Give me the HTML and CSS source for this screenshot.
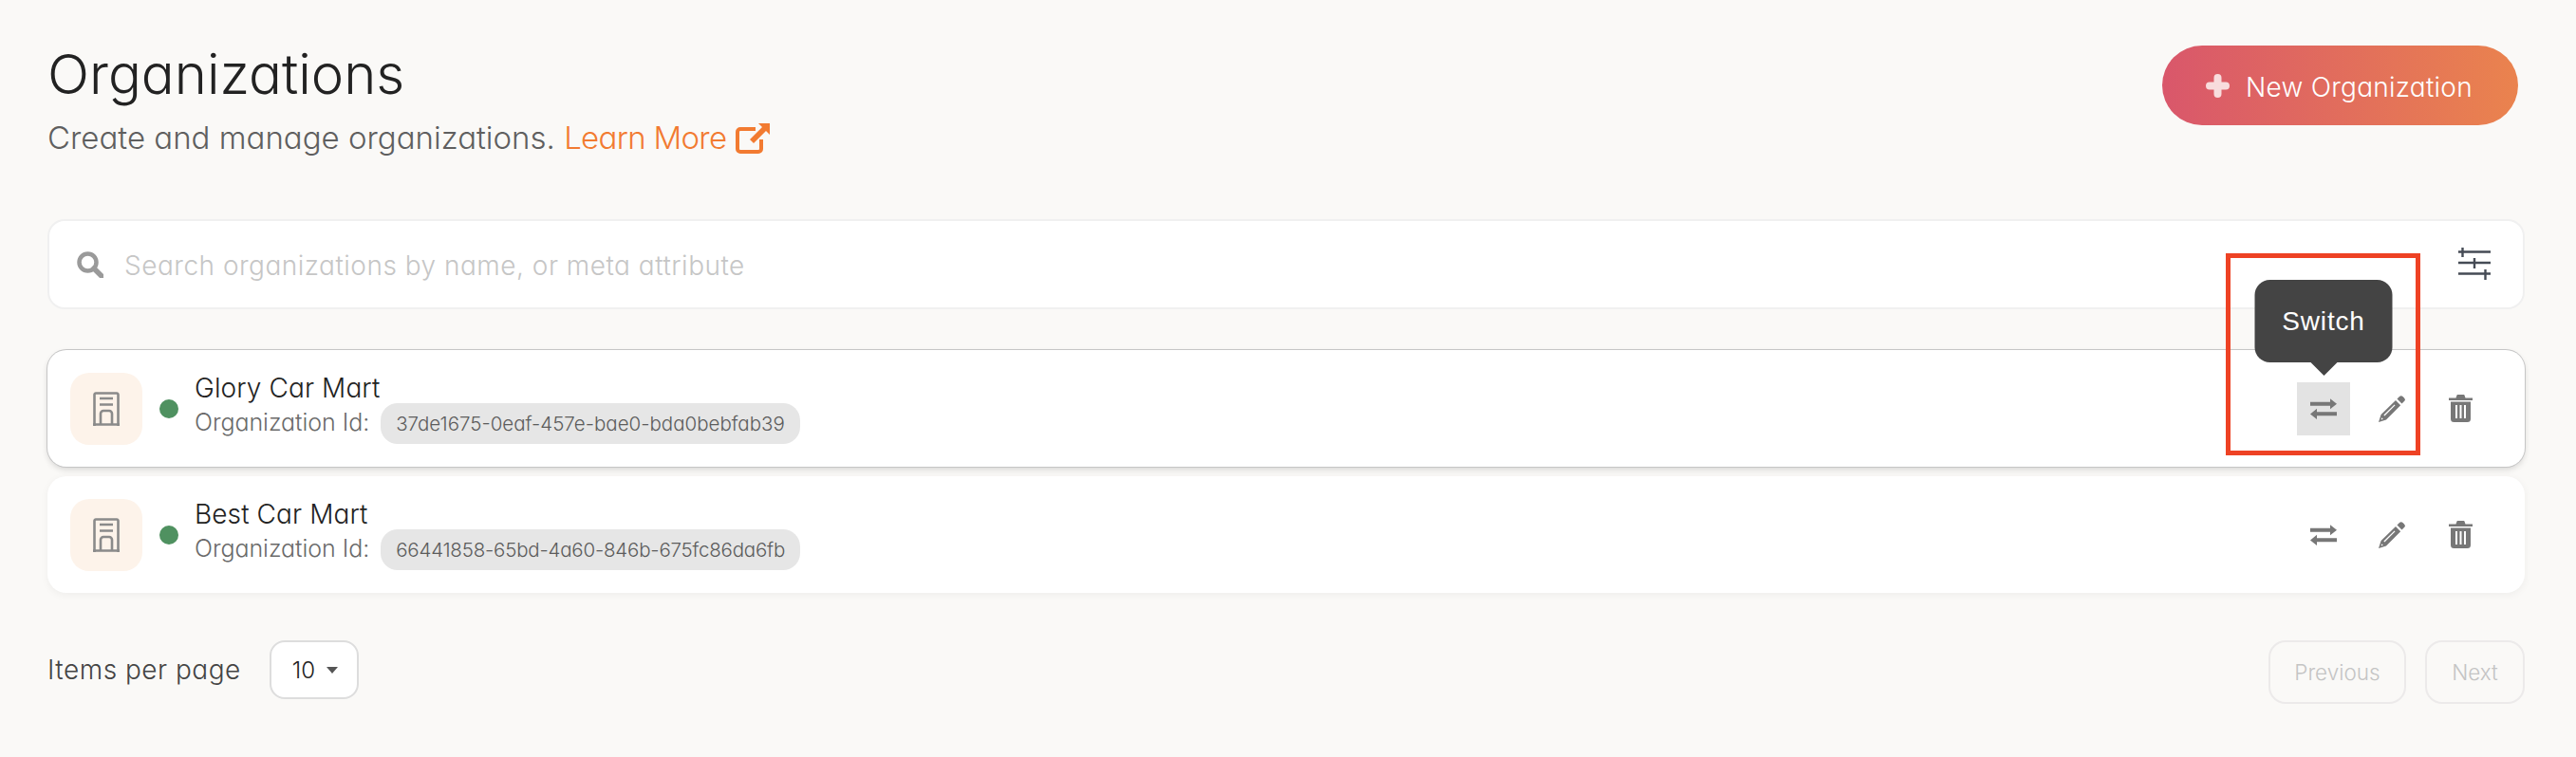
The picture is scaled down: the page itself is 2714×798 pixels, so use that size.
FILE: index.html
```html
<!DOCTYPE html>
<html lang="en">
<head>
<meta charset="utf-8">
<title>Organizations</title>
<link rel="stylesheet" href="styles.css">
</head>
<body>
<main class="page">
  <header class="header">
    <div class="heading">
      <h1 class="title">Organizations</h1>
      <p class="subtitle">Create and manage organizations. <a class="learn" href="#">Learn More<svg class="ext-icon" viewBox="0 0 36 32" aria-hidden="true"><path d="M21 6H5a3 3 0 0 0-3 3v18a3 3 0 0 0 3 3h19a3 3 0 0 0 3-3V17" fill="none" stroke="currentColor" stroke-width="4"/><path d="M24 0h12v12l-4-4L19 21l-4-4L28 4z" fill="currentColor"/></svg></a></p>
    </div>
    <button class="new-btn"><svg class="plus" viewBox="0 0 25 25" aria-hidden="true"><path d="M12.5 4v17M4 12.5h17" stroke="currentColor" stroke-width="8" stroke-linecap="round"/></svg><span class="new-label">New Organization</span></button>
  </header>

  <section class="content">
    <div class="search">
      <svg class="search-icon" viewBox="0 0 28 28" aria-hidden="true"><circle cx="11.5" cy="11.5" r="9" fill="none" stroke="currentColor" stroke-width="4.5"/><path d="M18 18l8 8" stroke="currentColor" stroke-width="5.5" stroke-linecap="round"/></svg>
      <span class="placeholder">Search organizations by name, or meta attribute</span>
      <svg class="filter-icon" viewBox="0 0 34 34" aria-hidden="true"><path d="M0 4.500h34M0 16h34M0 27.500h34M4.500 0v10M17 11v11M28.500 23v11" stroke="currentColor" stroke-width="2.400" fill="none"/></svg>
    </div>

    <div class="rows">
      <article class="row row-active">
        <div class="org-icon"><svg class="building" viewBox="0 0 28 36" aria-hidden="true"><path d="M1.500 36V3a1.500 1.500 0 0 1 1.500-1.500h22A1.500 1.500 0 0 1 26.500 3v33M0 34.500h28M7 7h14M7 13.500h14M8 35V23a3 3 0 0 1 3-3h6a3 3 0 0 1 3 3v12" fill="none" stroke="currentColor" stroke-width="2.600"/></svg></div>
        <span class="dot"></span>
        <div class="org-text">
          <div class="org-name">Glory Car Mart</div>
          <div class="org-id"><span class="id-label">Organization Id:</span><span class="chip">37de1675-0eaf-457e-bae0-bda0bebfab39</span></div>
        </div>
        <div class="actions">
          <button class="action action-on">
            <span class="tooltip">Switch</span>
            <svg class="icon-swap" viewBox="0 0 28 22" aria-hidden="true"><path d="M0 3.800h21V.2L28 5.800 21 11.200V7.800H0zM28 14.200H7V10.800L0 16.400 7 22v-3.800h21z" fill="currentColor"/></svg>
          </button>
          <button class="action"><svg class="icon-pencil" viewBox="0 0 28 28" aria-hidden="true"><path fill-rule="evenodd" d="M18 5l5.200 5.200L8 25.400 0 28l2.600-8zM16.600 9.400L5.400 20.600l1 .9L17.500 10.300zM3.300 23.200l-.7 2.200 2.200-.7z" fill="currentColor"/><path d="M19.500 3.500L22 1a2.500 2.500 0 0 1 3.500 0L27 2.500a2.500 2.500 0 0 1 0 3.500l-2.500 2.500z" fill="currentColor"/></svg></button>
          <button class="action"><svg class="icon-trash" viewBox="0 0 25 29" aria-hidden="true"><path d="M0 3.500h7.500L8.500.5a1 1 0 0 1 1-.5h6a1 1 0 0 1 1 .5l1 3H25V6H0zM2 7.500h21V25.500a3.500 3.500 0 0 1-3.500 3.500h-14A3.500 3.500 0 0 1 2 25.500zM7 11v14h2V11zM11.500 11v14h2V11zM16 11v14h2V11z" fill-rule="evenodd" fill="currentColor"/></svg></button>
        </div>
      </article>

      <article class="row">
        <div class="org-icon"><svg class="building" viewBox="0 0 28 36" aria-hidden="true"><path d="M1.500 36V3a1.500 1.500 0 0 1 1.500-1.500h22A1.500 1.500 0 0 1 26.500 3v33M0 34.500h28M7 7h14M7 13.500h14M8 35V23a3 3 0 0 1 3-3h6a3 3 0 0 1 3 3v12" fill="none" stroke="currentColor" stroke-width="2.600"/></svg></div>
        <span class="dot"></span>
        <div class="org-text">
          <div class="org-name">Best Car Mart</div>
          <div class="org-id"><span class="id-label">Organization Id:</span><span class="chip chip-digits">66441858-65bd-4a60-846b-675fc86da6fb</span></div>
        </div>
        <div class="actions">
          <button class="action"><svg class="icon-swap" viewBox="0 0 28 22" aria-hidden="true"><path d="M0 3.800h21V.2L28 5.800 21 11.200V7.800H0zM28 14.200H7V10.800L0 16.400 7 22v-3.800h21z" fill="currentColor"/></svg></button>
          <button class="action"><svg class="icon-pencil" viewBox="0 0 28 28" aria-hidden="true"><path fill-rule="evenodd" d="M18 5l5.200 5.200L8 25.400 0 28l2.600-8zM16.600 9.400L5.400 20.600l1 .9L17.500 10.300zM3.300 23.200l-.7 2.200 2.200-.7z" fill="currentColor"/><path d="M19.500 3.500L22 1a2.500 2.500 0 0 1 3.500 0L27 2.500a2.500 2.500 0 0 1 0 3.500l-2.500 2.500z" fill="currentColor"/></svg></button>
          <button class="action"><svg class="icon-trash" viewBox="0 0 25 29" aria-hidden="true"><path d="M0 3.500h7.500L8.500.5a1 1 0 0 1 1-.5h6a1 1 0 0 1 1 .5l1 3H25V6H0zM2 7.500h21V25.500a3.500 3.500 0 0 1-3.500 3.500h-14A3.500 3.500 0 0 1 2 25.500zM7 11v14h2V11zM11.500 11v14h2V11zM16 11v14h2V11z" fill-rule="evenodd" fill="currentColor"/></svg></button>
        </div>
      </article>
    </div>

    <div class="highlight"></div>
  </section>

  <footer class="footer">
    <div class="per-page">
      <span class="per-label">Items per page</span>
      <div class="select"><span>10</span><i class="caret"></i></div>
    </div>
    <div class="pager">
      <button class="page-btn btn-prev">Previous</button>
      <button class="page-btn btn-next">Next</button>
    </div>
  </footer>
</main>
</body>
</html>
```

FILE: styles.css
```css
* { box-sizing: border-box; }
html, body { margin: 0; padding: 0; }
body {
  background: #faf9f7;
  font-family: Inter, "Liberation Sans", sans-serif;
  font-feature-settings: "cv11" 1;
  font-weight: 300;
  color: #222;
  overflow: hidden;
}
.page { width: 2714px; height: 798px; padding: 48px 54px 0 50px; }
.header { display: flex; justify-content: space-between; align-items: flex-start; height: 183px; }
.title { margin: 0; font-size: 58px; font-weight: 300; line-height: 60px; color: #222; }
.subtitle { margin: 17px 0 0; font-size: 33px; line-height: 40px; letter-spacing: 0; color: #5f5f5f; white-space: pre; }
.learn { color: #f27b31; text-decoration: none; letter-spacing: -0.7px; }
.ext-icon { width: 36px; height: 32px; margin-left: 10px; vertical-align: -5px; }
.new-btn {
  display: flex; align-items: center; gap: 17px;
  width: 375px; height: 84px; margin-right: 7px; padding: 0 0 0 46px;
  border: 0; border-radius: 42px;
  background: linear-gradient(90deg, #d9576b, #ea834e);
  color: #fff; font: inherit; font-size: 28px; letter-spacing: 0.25px;
}
.new-label { position: relative; top: 2px; }
.plus { width: 25px; height: 25px; color: #f8dcdc; flex: none; }

.content { position: relative; }
.search {
  display: flex; align-items: center; height: 95px; padding: 0 34px 0 29px;
  background: #fff; border: 2px solid #f0f0f0; border-radius: 18px;
}
.search-icon { width: 28px; height: 28px; color: #9a9a9a; flex: none; }
.placeholder { margin: 2px 0 0 22px; font-size: 28px; letter-spacing: 0.5px; color: #c6c6c6; flex: 1; }
.filter-icon { width: 34px; height: 34px; color: #454b55; flex: none; margin-bottom: 2px; }

.rows { display: flex; flex-direction: column; gap: 10px; margin-top: 43px; }
.row {
  display: flex; align-items: center; height: 123px; padding: 0 40px 0 24px;
  background: #fff; border-radius: 20px;
  box-shadow: 0 2px 8px rgba(0, 0, 0, .05);
}
.row-active { box-shadow: 0 0 0 1px #c6c6c6, 0 3px 6px rgba(0, 0, 0, .14); }
.org-icon {
  display: flex; align-items: center; justify-content: center;
  width: 76px; height: 76px; border-radius: 20px; background: #fdf3ea; flex: none;
}
.building { width: 28px; height: 36px; color: #8a8a8a; }
.dot { width: 20px; height: 20px; margin: 0 17px 0 18px; border-radius: 50%; background: #4f9160; flex: none; }
.org-text { flex: 1; display: flex; flex-direction: column; }
.org-name { font-size: 28px; line-height: 32px; color: #222; font-weight: 300; letter-spacing: 0.1px; }
.org-id { display: flex; align-items: center; gap: 12px; }
.id-label { font-size: 25px; color: #6a6a6a; margin-top: -3px; letter-spacing: -0.05px; }
.chip {
  height: 43px; padding: 0 16px; border-radius: 18px; background: #e6e6e6;
  font-size: 20.5px; line-height: 43px; color: #5c5c5c;
}
.chip-digits { letter-spacing: -0.2px; }
.actions { display: flex; gap: 16px; }
.action {
  position: relative; display: flex; align-items: center; justify-content: center;
  width: 56px; height: 56px; padding: 0; border: 0; background: none; color: #777;
}
.action-on { background: #e3e3e3; }
.icon-swap { width: 28px; height: 22px; }
.icon-pencil { width: 28px; height: 28px; }
.icon-trash { width: 25px; height: 29px; }
.tooltip {
  position: absolute; left: 50%; bottom: 77px; transform: translateX(-50%);
  width: 145px; height: 87px; border-radius: 16px; background: #444;
  color: #fff; font: inherit; font-size: 28px; letter-spacing: 0.8px; line-height: 87px; text-align: center;
}
.tooltip::after {
  content: ""; position: absolute; left: 50%; top: 100%; margin-left: -14px;
  border-style: solid; border-width: 14px 14px 0; border-color: #444 transparent transparent;
}
.highlight {
  position: absolute; top: 36px; left: 2295px; width: 205px; height: 213px;
  border: 5px solid #ee4224;
}

.footer { display: flex; justify-content: space-between; align-items: flex-start; margin-top: 50px; }
.per-page { display: flex; align-items: center; gap: 30px; }
.per-label { font-size: 28px; letter-spacing: 0.5px; color: #444; }
.select {
  display: flex; align-items: center; gap: 12px;
  width: 94px; height: 62px; padding-left: 22px;
  background: #fff; border: 2px solid #ddd; border-radius: 16px;
  font-size: 24px; color: #222;
}
.caret { width: 0; height: 0; border-style: solid; border-width: 7px 6px 0; border-color: #555 transparent transparent; }
.pager { display: flex; gap: 20px; }
.page-btn {
  height: 67px; padding: 0; background: transparent;
  border: 2px solid #eceaea; border-radius: 18px;
  font: inherit; font-size: 22.5px; color: #c4c4c4;
}
.btn-prev { width: 145px; }
.btn-next { width: 105px; }
```
